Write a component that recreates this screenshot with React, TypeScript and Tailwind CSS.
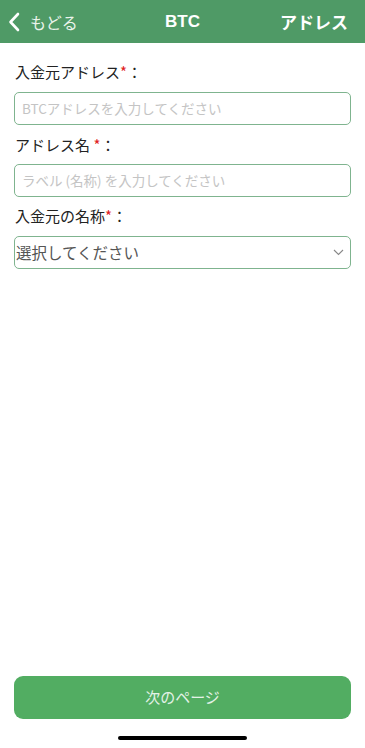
import React from "react";

const font = { fontFamily: '"Noto Sans CJK JP", "Noto Sans", "Liberation Sans", sans-serif' };

export default function App() {
  return (
    <div className="flex h-[748px] w-[365px] flex-col bg-white" style={font}>
      <div className="flex h-[43px] shrink-0 items-center bg-[#4f9a66] px-[8px] text-white">
        <div className="flex w-[120px] items-center">
          <svg width="12" height="20" viewBox="0 0 12 20" fill="none">
            <path d="M10 2 L2.5 10 L10 18" stroke="white" strokeWidth="2.6" strokeLinecap="round" strokeLinejoin="round" />
          </svg>
          <span className="ml-[10px] text-[16px] leading-none text-[#eaf4ec]">もどる</span>
        </div>
        <div className="flex-1 text-center text-[17px] font-bold leading-none" style={{ fontFamily: '"Liberation Sans", "Noto Sans CJK JP", sans-serif' }}>BTC</div>
        <div className="w-[120px] pr-[9px] text-right text-[17px] font-bold leading-none">アドレス</div>
      </div>

      <div className="flex flex-col px-[14px] pt-[19px]">
        <div className="pl-[1px] text-[15px] leading-[20px] text-[#222]">
          入金元アドレス<span className="text-[#e02020]">*</span>：
        </div>
        <div className="mt-[10px] flex h-[33px] items-center rounded-[5px] border border-[#7fb48f] px-[7px] text-[13.5px] text-[#c4c4c4]">
          BTCアドレスを入力してください
        </div>

        <div className="mt-[10px] pl-[1px] text-[15px] leading-[20px] text-[#222]">
          アドレス名 <span className="text-[#e02020]">*</span>：
        </div>
        <div className="mt-[9px] flex h-[33px] items-center rounded-[5px] border border-[#7fb48f] px-[7px] text-[13.5px] text-[#c4c4c4]">
          ラベル (名称) を入力してください
        </div>

        <div className="mt-[9px] pl-[1px] text-[15px] leading-[20px] text-[#222]">
          入金元の名称<span className="text-[#e02020]">*</span>：
        </div>
        <div className="mt-[10px] flex h-[33px] items-center justify-between rounded-[5px] border border-[#7fb48f] pl-[1px] pr-[6px] text-[15.5px] text-[#555]">
          <span>選択してください</span>
          <svg width="11" height="7" viewBox="0 0 11 7" fill="none">
            <path d="M1 1 L5.5 5.5 L10 1" stroke="#888" strokeWidth="1.1" />
          </svg>
        </div>
      </div>

      <div className="mt-auto px-[14px]">
        <div className="flex h-[43px] items-center justify-center rounded-[9px] bg-[#52ad62] text-[15px] text-[#e3f2e6]">
          次のページ
        </div>
      </div>
      <div className="flex h-[29px] shrink-0 items-start justify-center pt-[17px]">
        <div className="h-[4px] w-[129px] rounded-full bg-black" />
      </div>
    </div>
  );
}
